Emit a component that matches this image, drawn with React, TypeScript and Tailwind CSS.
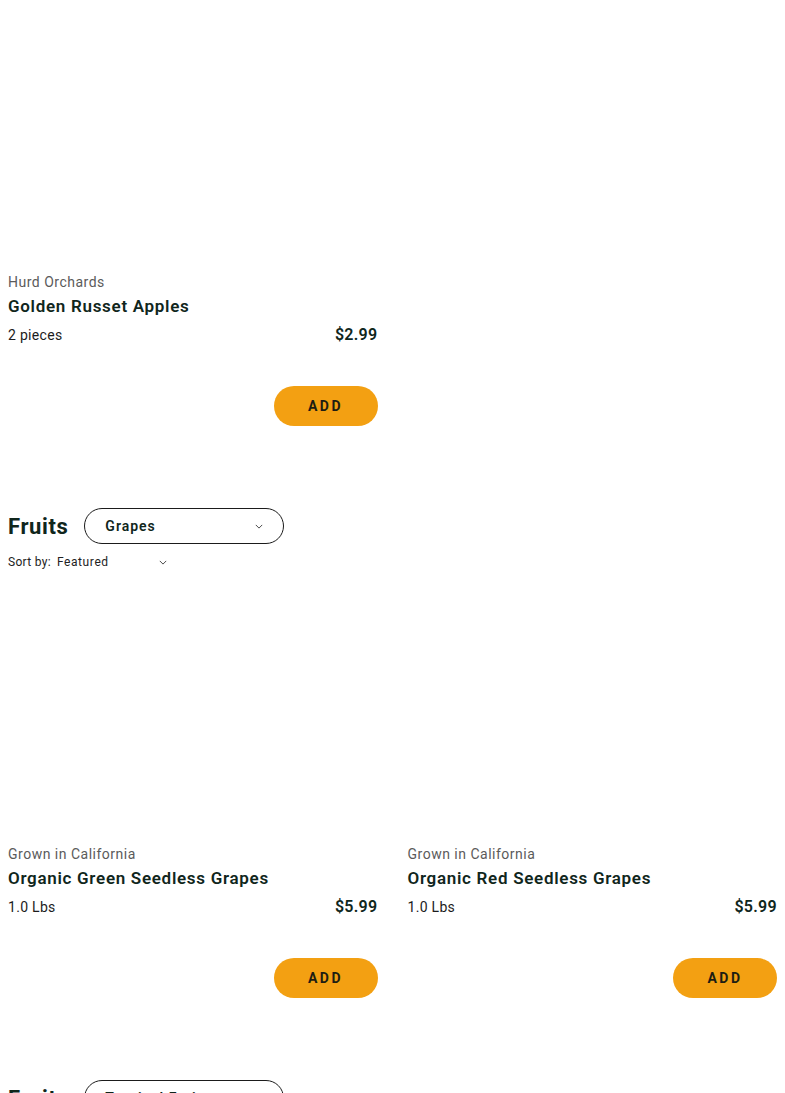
import React from 'react';

type Product = {
  brand: string;
  name: string;
  size: string;
  price: string;
};

const Chevron = ({ className = '' }: { className?: string }) => (
  <svg viewBox="0 0 10 6" className={className} fill="none" stroke="currentColor" strokeWidth="1.1">
    <path d="M1 1l4 4 4-4" />
  </svg>
);

const ProductCard = ({ product, imageClass }: { product: Product; imageClass: string }) => (
  <div className="flex flex-col">
    <div className={imageClass} />
    <div className="text-[14px] leading-5 text-[#5b5b5b] tracking-[0.5px]">{product.brand}</div>
    <div className="mt-0.5 text-[17px] leading-6 font-semibold text-[#10261c] tracking-[0.7px]">{product.name}</div>
    <div className="mt-[7px] flex items-center justify-between leading-5">
      <span className="text-[14px] text-[#1c1c1c] tracking-[0.3px]">{product.size}</span>
      <span className="text-[16px] font-semibold text-[#10261c] tracking-[0.3px]">{product.price}</span>
    </div>
    <div className="mt-[41px] flex justify-end">
      <button className="h-10 w-[104px] rounded-full bg-[#f3a012] text-[14px] font-bold tracking-[2.5px] text-[#1d1d12]">
        ADD
      </button>
    </div>
  </div>
);

const SectionHeader = ({ category }: { category: string }) => (
  <div>
    <div className="flex items-center gap-4 h-9">
      <h2 className="text-[22px] font-bold text-[#10261c] tracking-[0.6px]">Fruits</h2>
      <div className="flex h-9 w-[200px] items-center justify-between rounded-full border border-[#1b1b1b] pl-5 pr-5">
        <span className="text-[14px] font-semibold tracking-[1px] text-[#10261c]">{category}</span>
        <Chevron className="w-[8px] h-[5px] text-[#333]" />
      </div>
    </div>
    <div className="mt-3 flex items-center h-3 text-[12px] text-[#222]">
      <span className="tracking-[0.3px]">Sort by:</span>
      <span className="ml-[6px] w-[102px] tracking-[0.6px]">Featured</span>
      <Chevron className="w-[8px] h-[5px] text-[#333]" />
    </div>
  </div>
);

export default function App() {
  const apples: Product[] = [
    { brand: 'Hurd Orchards', name: 'Golden Russet Apples', size: '2 pieces', price: '$2.99' },
  ];
  const grapes: Product[] = [
    { brand: 'Grown in California', name: 'Organic Green Seedless Grapes', size: '1.0 Lbs', price: '$5.99' },
    { brand: 'Grown in California', name: 'Organic Red Seedless Grapes', size: '1.0 Lbs', price: '$5.99' },
  ];

  return (
    <div className="min-h-screen bg-white px-2 font-['Roboto',sans-serif] overflow-hidden h-[1093px]">
      <div className="grid grid-cols-2 gap-x-[30px]">
        {apples.map((p) => (
          <ProductCard key={p.name} product={p} imageClass="h-[272px]" />
        ))}
      </div>

      <div className="mt-[82px]">
        <SectionHeader category="Grapes" />
        <div className="grid grid-cols-2 gap-x-[30px]">
          {grapes.map((p) => (
            <ProductCard key={p.name} product={p} imageClass="h-[276px]" />
          ))}
        </div>
      </div>

      <div className="mt-[82px]">
        <SectionHeader category="Tropical Fruits" />
      </div>
    </div>
  );
}
